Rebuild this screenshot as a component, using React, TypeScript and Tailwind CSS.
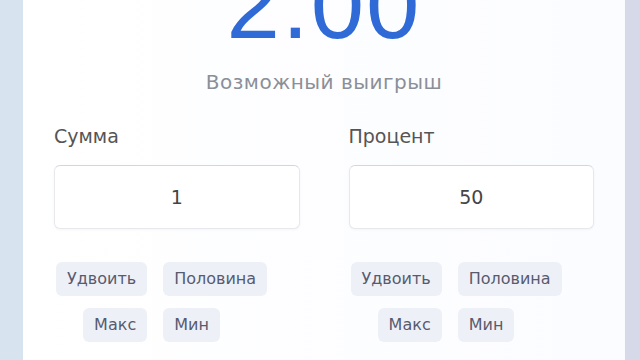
import React from 'react';

const font = { fontFamily: '"DejaVu Sans", Verdana, sans-serif' };
const numFont = { fontFamily: '"Liberation Sans", Arial, sans-serif', fontWeight: 300 };

function QuickButtons() {
  return (
    <div className="mt-[33px] ml-[2px] grid grid-cols-[auto_auto] justify-start gap-x-4 gap-y-3">
      <button className="justify-self-end rounded-md bg-[#eef0f8] px-[11px] py-[7px] text-[16px] leading-5 text-[#565b6e]">
        Удвоить
      </button>
      <button className="justify-self-start rounded-md bg-[#eef0f8] px-[11px] py-[7px] text-[16px] leading-5 text-[#565b6e]">
        Половина
      </button>
      <button className="justify-self-end rounded-md bg-[#eef0f8] px-[11px] py-[7px] text-[16px] leading-5 text-[#565b6e]">
        Макс
      </button>
      <button className="justify-self-start rounded-md bg-[#eef0f8] px-[11px] py-[7px] text-[16px] leading-5 text-[#565b6e]">
        Мин
      </button>
    </div>
  );
}

function Field({ label, value }: { label: string; value: string }) {
  return (
    <div className="flex flex-col">
      <label className="text-[19px] leading-6 text-[#555]">{label}</label>
      <div className="mt-[17px] flex h-[64px] items-center justify-center rounded-md border border-[#e6e8ec] border-t-[#d4d6da] bg-white text-[19px] text-[#444] shadow-[0_1px_3px_rgba(0,0,0,0.04)]">
        {value}
      </div>
      <QuickButtons />
    </div>
  );
}

export default function App() {
  return (
    <div style={font} className="flex h-[360px] w-[640px] overflow-hidden bg-[#d5d9e8]">
      <div className="w-[23px] shrink-0 bg-[#d7e3ee]" />
      <div className="flex w-[602px] shrink-0 flex-col bg-gradient-to-r from-white to-[#fbfcff] px-[31px]">
        <div style={numFont} className="-mt-[43px] text-center text-[96px] leading-none tracking-[2px] text-[#2f6ad6]">
          2.00
        </div>
        <p className="mt-[15px] text-center text-[20px] leading-7 tracking-[0.5px] text-[#8b8f98]">Возможный выигрыш</p>
        <div className="mt-[28px] grid grid-cols-2 gap-x-[49px]">
          <Field label="Сумма" value="1" />
          <Field label="Процент" value="50" />
        </div>
      </div>
    </div>
  );
}
